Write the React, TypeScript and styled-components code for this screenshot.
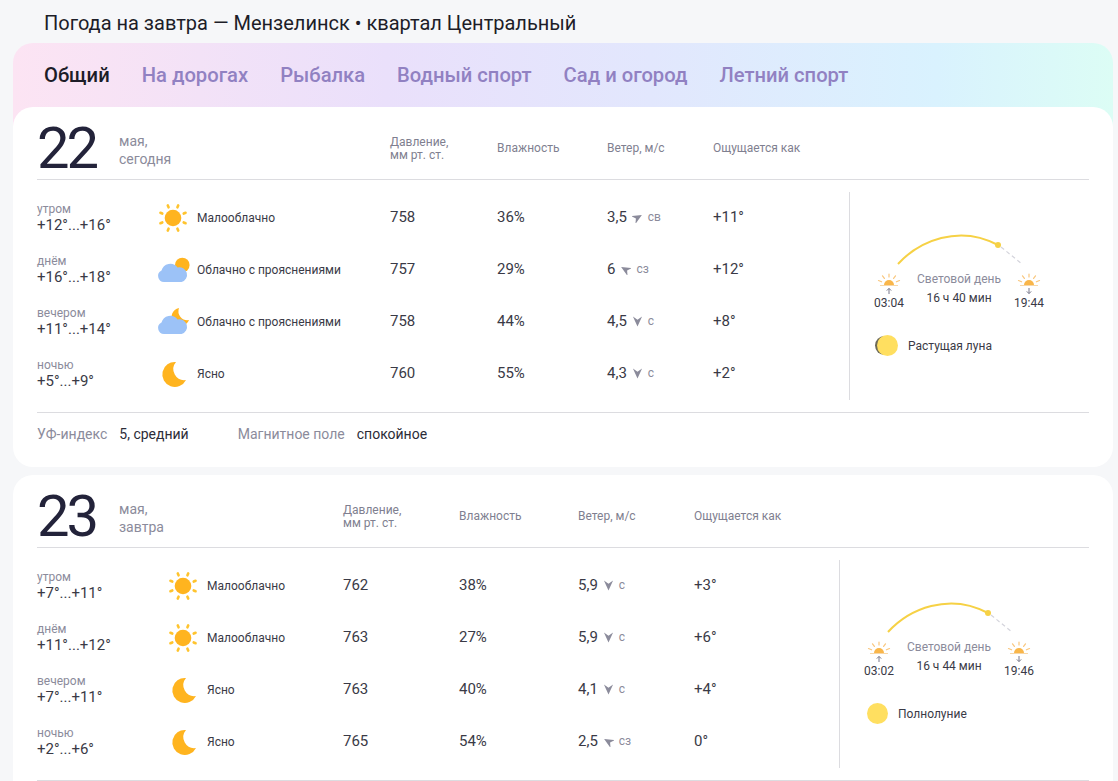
import styled, { createGlobalStyle } from 'styled-components';

const GlobalStyle = createGlobalStyle`
  html, body {
    margin: 0;
    height: 100%;
    overflow: hidden;
    background: #f6f7f9;
  }
  body {
    font-family: Roboto, "Noto Sans", sans-serif;
    color: #21212f;
  }
`;

type WeatherKind = 'sun' | 'cloudSun' | 'cloudMoon' | 'moon';

type Row = {
  part: string;
  temp: string;
  kind: WeatherKind;
  text: string;
  pressure: string;
  humidity: string;
  wind: string;
  angle: number;
  dir: string;
  feels: string;
};

type Day = {
  num: string;
  month: string;
  label: string;
  columns: string;
  iconOffset: number;
  sunrise: string;
  sunset: string;
  length: string;
  moon: string;
  moonPhase: boolean;
  rows: Row[];
};

const days: Day[] = [
  {
    num: '22',
    month: 'мая,',
    label: 'сегодня',
    columns: '353px 107px 110px 106px 136px 240px',
    iconOffset: 121,
    sunrise: '03:04',
    sunset: '19:44',
    length: '16 ч 40 мин',
    moon: 'Растущая луна',
    moonPhase: true,
    rows: [
      { part: 'утром', temp: '+12°...+16°', kind: 'sun', text: 'Малооблачно', pressure: '758', humidity: '36%', wind: '3,5', angle: 60, dir: 'св', feels: '+11°' },
      { part: 'днём', temp: '+16°...+18°', kind: 'cloudSun', text: 'Облачно с прояснениями', pressure: '757', humidity: '29%', wind: '6', angle: -60, dir: 'сз', feels: '+12°' },
      { part: 'вечером', temp: '+11°...+14°', kind: 'cloudMoon', text: 'Облачно с прояснениями', pressure: '758', humidity: '44%', wind: '4,5', angle: 180, dir: 'с', feels: '+8°' },
      { part: 'ночью', temp: '+5°...+9°', kind: 'moon', text: 'Ясно', pressure: '760', humidity: '55%', wind: '4,3', angle: 180, dir: 'с', feels: '+2°' },
    ],
  },
  {
    num: '23',
    month: 'мая,',
    label: 'завтра',
    columns: '306px 116px 119px 116px 145px 250px',
    iconOffset: 131,
    sunrise: '03:02',
    sunset: '19:46',
    length: '16 ч 44 мин',
    moon: 'Полнолуние',
    moonPhase: false,
    rows: [
      { part: 'утром', temp: '+7°...+11°', kind: 'sun', text: 'Малооблачно', pressure: '762', humidity: '38%', wind: '5,9', angle: 180, dir: 'с', feels: '+3°' },
      { part: 'днём', temp: '+11°...+12°', kind: 'sun', text: 'Малооблачно', pressure: '763', humidity: '27%', wind: '5,9', angle: 180, dir: 'с', feels: '+6°' },
      { part: 'вечером', temp: '+7°...+11°', kind: 'moon', text: 'Ясно', pressure: '763', humidity: '40%', wind: '4,1', angle: 180, dir: 'с', feels: '+4°' },
      { part: 'ночью', temp: '+2°...+6°', kind: 'moon', text: 'Ясно', pressure: '765', humidity: '54%', wind: '2,5', angle: -60, dir: 'сз', feels: '0°' },
    ],
  },
];

const tabs = ['Общий', 'На дорогах', 'Рыбалка', 'Водный спорт', 'Сад и огород', 'Летний спорт'];

function SunShape() {
  const rays = [0, 45, 90, 135, 180, 225, 270, 315];
  return (
    <>
      <circle cx="15" cy="15" r="8.3" fill="#ffb41f" />
      {rays.map((r) => (
        <line
          key={r}
          x1="15"
          y1="1.4"
          x2="15"
          y2="3.4"
          stroke="#ffc42e"
          strokeWidth="2.6"
          strokeLinecap="round"
          transform={`rotate(${r + 22.5} 15 15)`}
        />
      ))}
    </>
  );
}

const moonPath = 'M18 3 A12.5 12.5 0 1 0 28 21 A11 11 0 0 1 18 3 Z';

function WeatherIcon({ kind }: { kind: WeatherKind }) {
  return (
    <IconSvg viewBox="0 0 30 30">
      {kind === 'sun' && <SunShape />}
      {kind === 'moon' && <path d={moonPath} fill="#ffb41f" />}
      {kind === 'cloudSun' && <circle cx="24.3" cy="10" r="7.3" fill="#ffb41f" />}
      {kind === 'cloudMoon' && (
        <path d="M21 1 A9 9 0 1 0 31 13 A9 9 0 0 1 21 1 Z" fill="#ffb41f" />
      )}
      {(kind === 'cloudSun' || kind === 'cloudMoon') && (
        <path
          d="M6 27 A6 6 0 0 1 3.5 15.6 A9 9 0 0 1 19.5 12.5 A7.4 7.4 0 0 1 23.5 27 Z"
          fill="#9cc2f7"
        />
      )}
    </IconSvg>
  );
}

function WindArrow({ angle }: { angle: number }) {
  return (
    <svg width="11" height="11" viewBox="0 0 12 12">
      <path
        d="M6 0.5 L11 11.5 L6 8 L1 11.5 Z"
        fill="#8b8b9b"
        transform={`rotate(${angle} 6 6)`}
      />
    </svg>
  );
}

function SunMark({ up }: { up: boolean }) {
  return (
    <svg width="24" height="24" viewBox="0 0 24 24">
      <path d="M7 13 A5 5 0 0 1 17 13 Z" fill="#f9b64a" />
      <g stroke="#f9c77e" strokeWidth="1.2" strokeLinecap="round">
        <line x1="12" y1="2" x2="12" y2="5" />
        <line x1="5.5" y1="3.8" x2="7.4" y2="6.4" />
        <line x1="18.5" y1="3.8" x2="16.6" y2="6.4" />
        <line x1="1.5" y1="8.5" x2="4.6" y2="9.8" />
        <line x1="22.5" y1="8.5" x2="19.4" y2="9.8" />
      </g>
      <rect x="3" y="13" width="18" height="1" fill="#f7d7a8" />
      <path
        d={up ? 'M12 22 V16.5 M9.8 18.6 L12 16.4 L14.2 18.6' : 'M12 16 V21.5 M9.8 19.4 L12 21.6 L14.2 19.4'}
        stroke="#77778a"
        strokeWidth="1"
        fill="none"
      />
    </svg>
  );
}

function SunArc() {
  return (
    <svg width="126" height="32" viewBox="0 0 126 32">
      <path d="M1 31 C22 8 62 -9 101 12" stroke="#f6d145" strokeWidth="2" fill="none" />
      <circle cx="101" cy="12" r="3" fill="#f6d145" />
      <path d="M104 14 L125 31" stroke="#d4d4dc" strokeWidth="1.2" strokeDasharray="4 3" fill="none" />
    </svg>
  );
}

function App() {
  return (
    <>
      <GlobalStyle />
      <Page>
        <Title>Погода на завтра — Мензелинск • квартал Центральный</Title>
        <GradientPanel>
          <Tabs>
            {tabs.map((tab, index) => (
              <Tab key={tab} $active={index === 0}>
                {tab}
              </Tab>
            ))}
          </Tabs>
          <DayCard day={days[0]} footer />
        </GradientPanel>
        <DayCard day={days[1]} />
      </Page>
    </>
  );
}

function DayCard({ day, footer }: { day: Day; footer?: boolean }) {
  return (
    <Card>
      <HeadRow $columns={day.columns}>
        <DateCell>
          <DateNum>{day.num}</DateNum>
          <DateText>
            {day.month}
            <br />
            {day.label}
          </DateText>
        </DateCell>
        <HeadLabel>
          Давление,
          <br />
          мм рт. ст.
        </HeadLabel>
        <HeadLabel>Влажность</HeadLabel>
        <HeadLabel>Ветер, м/с</HeadLabel>
        <HeadLabel>Ощущается как</HeadLabel>
      </HeadRow>
      <Body>
        <RowList>
          {day.rows.map((row) => (
            <DataRow key={row.part} $columns={day.columns}>
              <WeatherCell $offset={day.iconOffset}>
                <PartBlock>
                  <PartName>{row.part}</PartName>
                  <Temp>{row.temp}</Temp>
                </PartBlock>
                <IconBox>
                  <WeatherIcon kind={row.kind} />
                </IconBox>
                <WeatherText>{row.text}</WeatherText>
              </WeatherCell>
              <Value>{row.pressure}</Value>
              <Value>{row.humidity}</Value>
              <WindCell>
                <Value>{row.wind}</Value>
                <WindArrow angle={row.angle} />
                <WindDir>{row.dir}</WindDir>
              </WindCell>
              <Value>{row.feels}</Value>
            </DataRow>
          ))}
        </RowList>
        <SidePanel>
          <SunArc />
          <SunRow>
            <SunEnd>
              <SunMark up />
              <SunTime>{day.sunrise}</SunTime>
            </SunEnd>
            <DayLength>
              <DayLengthLabel>Световой день</DayLengthLabel>
              <DayLengthValue>{day.length}</DayLengthValue>
            </DayLength>
            <SunEnd>
              <SunMark up={false} />
              <SunTime>{day.sunset}</SunTime>
            </SunEnd>
          </SunRow>
          <MoonRow>
            <MoonDisc $phase={day.moonPhase} />
            <MoonText>{day.moon}</MoonText>
          </MoonRow>
        </SidePanel>
      </Body>
      <Footer>
        {footer && (
          <>
            <FootLabel>УФ-индекс</FootLabel>
            <FootValue>5, средний</FootValue>
            <FootLabel>Магнитное поле</FootLabel>
            <FootValue>спокойное</FootValue>
          </>
        )}
      </Footer>
    </Card>
  );
}

export default App;

const Page = styled.div`
  width: 1100px;
  padding: 0 5px 0 13px;
  display: flex;
  flex-direction: column;
  gap: 8px;
`;

const Title = styled.h1`
  margin: 0 0 -8px;
  height: 43px;
  padding: 0 0 0 31px;
  font-size: 20px;
  line-height: 47px;
  font-weight: 400;
  color: #1d1d28;
`;

const GradientPanel = styled.section`
  border-radius: 20px;
  background: linear-gradient(90deg, #fce4f3 0%, #eae0fb 34%, #e2e7fd 58%, #d9f2fe 84%, #dcfdf5 100%) top / 100% 90px no-repeat;
`;

const Tabs = styled.nav`
  height: 64px;
  padding-left: 31px;
  display: flex;
  align-items: center;
  gap: 32px;
`;

const Tab = styled.span<{ $active: boolean }>`
  font-size: 20.2px;
  font-weight: 500;
  color: ${({ $active }) => ($active ? '#1d1d28' : '#9181c2')};
`;

const Card = styled.article`
  background: #fff;
  border-radius: 20px;
  padding: 0 24px;
`;

const HeadRow = styled.header<{ $columns: string }>`
  box-sizing: border-box;
  height: 73px;
  padding-top: 10px;
  display: grid;
  grid-template-columns: ${({ $columns }) => $columns};
  align-items: center;
  border-bottom: 1px solid #dcdce0;
`;

const DateCell = styled.div`
  display: flex;
  align-items: center;
`;

const DateNum = styled.span`
  width: 82px;
  font-size: 58px;
  line-height: 62px;
  letter-spacing: -3px;
  font-weight: 400;
  color: #23233a;
`;

const DateText = styled.span`
  padding-top: 4px;
  font-size: 14px;
  line-height: 18px;
  color: #8b8b9b;
`;

const HeadLabel = styled.span`
  padding-top: 1px;
  font-size: 12px;
  line-height: 13px;
  color: #7f7f90;
`;

const Body = styled.div`
  padding: 12px 0;
  display: flex;
`;

const RowList = styled.div`
  display: flex;
  flex-direction: column;
  margin-top: -1px;
`;

const DataRow = styled.div<{ $columns: string }>`
  height: 52px;
  display: grid;
  grid-template-columns: ${({ $columns }) => $columns.split(' ').slice(0, 5).join(' ')};
  align-items: center;
`;

const WeatherCell = styled.div<{ $offset: number }>`
  display: grid;
  grid-template-columns: ${({ $offset }) => $offset}px 30px 1fr;
  align-items: center;
`;

const PartBlock = styled.div`
  display: flex;
  flex-direction: column;
  padding-top: 1px;
`;

const PartName = styled.span`
  font-size: 12px;
  line-height: 14px;
  color: #8b8b9b;
`;

const Temp = styled.span`
  font-size: 15px;
  line-height: 18px;
  color: #3a3a46;
`;

const IconBox = styled.span`
  display: flex;
  width: 30px;
  height: 30px;
  padding-top: 1px;
`;

const IconSvg = styled.svg`
  width: 30px;
  height: 30px;
  overflow: visible;
`;

const WeatherText = styled.span`
  padding: 1px 0 0 9px;
  font-size: 12px;
  color: #3a3a46;
  white-space: nowrap;
`;

const Value = styled.span`
  font-size: 15px;
  color: #3a3a46;
`;

const WindCell = styled.div`
  display: flex;
  align-items: center;
  gap: 5px;
`;

const WindDir = styled.span`
  font-size: 12px;
  color: #8b8b9b;
`;

const SidePanel = styled.aside`
  flex: 1;
  height: 208px;
  border-left: 1px solid #dcdce0;
  padding: 41px 0 0 23px;
  box-sizing: border-box;
  margin-right: -1px;

  > svg {
    display: block;
    margin-left: 24px;
  }
`;

const SunRow = styled.div`
  width: 172px;
  margin-top: 7px;
  display: flex;
  justify-content: space-between;
`;

const SunEnd = styled.div`
  width: 32px;
  display: flex;
  flex-direction: column;
  align-items: center;
`;

const SunTime = styled.span`
  margin-top: -1px;
  font-size: 12px;
  line-height: 16px;
  color: #3a3a46;
`;

const DayLength = styled.div`
  display: flex;
  flex-direction: column;
  align-items: center;
  gap: 5px;
`;

const DayLengthLabel = styled.span`
  font-size: 12px;
  line-height: 14px;
  color: #8b8b9b;
`;

const DayLengthValue = styled.span`
  font-size: 12px;
  line-height: 14px;
  color: #3a3a46;
`;

const MoonRow = styled.div`
  margin-top: 24px;
  padding-left: 4px;
  display: flex;
  align-items: center;
  gap: 10px;
`;

const MoonDisc = styled.span<{ $phase: boolean }>`
  width: 21px;
  height: 21px;
  border-radius: 50%;
  background: #ffdf60;
  box-shadow: ${({ $phase }) => ($phase ? '-3px 0 0 -1px #6d6a58' : 'none')};
`;

const MoonText = styled.span`
  font-size: 12px;
  color: #3a3a46;
`;

const Footer = styled.footer`
  box-sizing: border-box;
  height: 55px;
  padding-bottom: 13px;
  border-top: 1px solid #dcdce0;
  display: flex;
  align-items: center;
  font-size: 14px;
`;

const FootLabel = styled.span`
  color: #8b8b9b;
  margin-right: 12px;
`;

const FootValue = styled.span`
  color: #2c2c38;
  margin-right: 49px;
`;
